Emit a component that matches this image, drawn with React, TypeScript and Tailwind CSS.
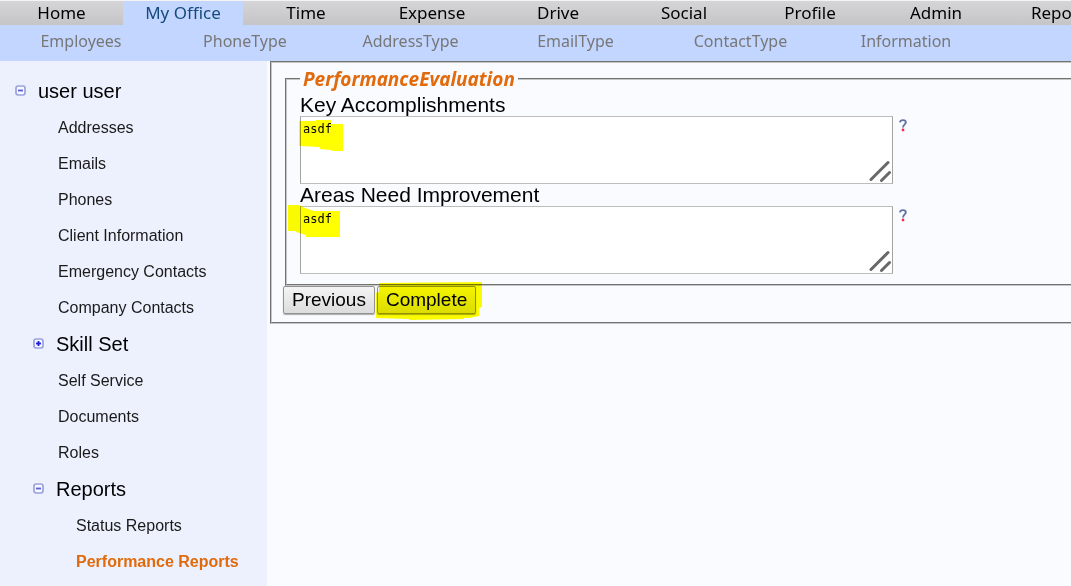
import React from "react";

const tabs = [
  { label: "Home", width: "w-[123px]" },
  { label: "My Office", width: "w-[120px]", active: true },
  { label: "Time", width: "w-[126px]" },
  { label: "Expense", width: "w-[126px]" },
  { label: "Drive", width: "w-[126px]" },
  { label: "Social", width: "w-[126px]" },
  { label: "Profile", width: "w-[126px]" },
  { label: "Admin", width: "w-[126px]" },
  { label: "Reports", width: "w-[126px]" },
];

const subTabs = [
  { label: "Employees", width: "w-[162px]" },
  { label: "PhoneType", width: "w-[166px]" },
  { label: "AddressType", width: "w-[165px]" },
  { label: "EmailType", width: "w-[165px]" },
  { label: "ContactType", width: "w-[165px]" },
  { label: "Information", width: "w-[166px]" },
];

function ToggleIcon({ open }: { open: boolean }) {
  return (
    <svg width="11" height="11" viewBox="0 0 11 11" fill="none" aria-hidden="true">
      <rect x="1" y="1" width="9" height="9" rx="2.2" fill="#f6f7ff" stroke="#9aa2dc" strokeWidth="1.7" />
      <path d="M3 5.5H8" stroke={open ? "#5a5fd8" : "#2020d0"} strokeWidth="1.8" />
      {!open && <path d="M5.5 3V8" stroke="#2020d0" strokeWidth="1.8" />}
    </svg>
  );
}

function Branch({ label, open, root = false }: { label: string; open: boolean; root?: boolean }) {
  return (
    <button
      type="button"
      aria-expanded={open}
      className={
        "flex h-[37px] items-center gap-3 pb-0.5 text-[20px] leading-6 text-black " + (root ? "pl-[15px]" : "pl-[33px]")
      }
    >
      <ToggleIcon open={open} />
      {label}
    </button>
  );
}

function Leaf({ label, deep = false, active = false }: { label: string; deep?: boolean; active?: boolean }) {
  return (
    <li className={deep ? "pl-[76px]" : "pl-[58px]"}>
      <a
        href="#"
        className={"flex h-9 items-center text-[16px] " + (active ? "font-bold text-[#e06a0c]" : "text-[#1a1a1a]")}
      >
        {label}
      </a>
    </li>
  );
}

function Mark({ className, width, height, points }: { className: string; width: number; height: number; points: string }) {
  return (
    <svg
      className={"pointer-events-none absolute mix-blend-multiply " + className}
      width={width}
      height={height}
      viewBox={`0 0 ${width} ${height}`}
      aria-hidden="true"
    >
      <polygon points={points} fill="#ffff00" />
    </svg>
  );
}

function Field({ id, label, children }: { id: string; label: string; children: React.ReactNode }) {
  return (
    <div>
      <label htmlFor={id} className="block h-[22px] text-[21px] leading-[22px]">
        {label}
      </label>
      <div className="flex h-[68px] items-start gap-1.5">
        <div className="relative">
          <textarea
            id={id}
            defaultValue="asdf"
            className="block h-[68px] w-[593px] resize-none border border-x-[#a3a3a3] border-y-[#bdbdbd] bg-white px-0.5 py-1 font-['DejaVu_Sans_Mono','Liberation_Mono',monospace] text-[12px] leading-4 text-black outline-none"
          />
          <svg className="pointer-events-none absolute right-0.5 bottom-0.5" width="22" height="22" viewBox="0 0 22 22" aria-hidden="true">
            <path d="M2 19.5L19 2.5M12.5 20.5L20.5 12.5" stroke="#686868" strokeWidth="3" strokeLinecap="round" />
          </svg>
          {children}
        </div>
        <button type="button" aria-label={"Help for " + label} className="mt-[3px]">
          <svg width="8" height="13" viewBox="0 0 8 13" fill="none" aria-hidden="true">
            <path d="M1 3.4C1.2 1.8 2.4 1.1 4 1.1C5.8 1.1 6.8 2 6.8 3.4C6.8 5.3 4 5.6 4 8.6" stroke="#6272a4" strokeWidth="1.9" />
            <rect x="2.8" y="9.6" width="2.4" height="2.6" fill="#f02850" />
          </svg>
        </button>
      </div>
    </div>
  );
}

const buttonStyle =
  "h-7 rounded-[2px] border border-[#929292] bg-linear-to-b from-[#f4f4f4] to-[#dcdcdc] px-2 text-[19px] leading-6 text-black shadow-[0_1px_1px_#aaaaaa]";

export default function App() {
  return (
    <div className="flex min-h-screen flex-col overflow-hidden bg-[#fafbff] font-['Liberation_Sans',Arial,sans-serif] text-black">
      <header className="font-['Noto_Sans',sans-serif]">
        <nav aria-label="Main" className="border-t border-[#f4f4f4] bg-linear-to-b from-[#d5d5d7] to-[#c5c5c7]">
          <ul className="flex h-6">
            {tabs.map((tab) => (
              <li key={tab.label} className={"shrink-0 " + tab.width}>
                <a
                  href="#"
                  className={
                    "flex h-full items-center justify-center text-[17px] leading-6 " +
                    (tab.active ? "bg-[#c3d6ff] text-[#174a7c]" : "text-black")
                  }
                >
                  {tab.label}
                </a>
              </li>
            ))}
          </ul>
        </nav>
        <nav aria-label="My Office" className="h-9 bg-[#c3d6ff]">
          <ul className="flex h-[31px]">
            {subTabs.map((tab) => (
              <li key={tab.label} className={"shrink-0 " + tab.width}>
                <a href="#" className="flex h-full items-center justify-center text-[16px] text-[#777777]">
                  {tab.label}
                </a>
              </li>
            ))}
          </ul>
        </nav>
      </header>

      <div className="flex grow">
        <aside className="w-[267px] shrink-0 bg-[#ecf1fd] pt-3">
          <Branch label="user user" open root />
          <ul>
            <Leaf label="Addresses" />
            <Leaf label="Emails" />
            <Leaf label="Phones" />
            <Leaf label="Client Information" />
            <Leaf label="Emergency Contacts" />
            <Leaf label="Company Contacts" />
            <li>
              <Branch label="Skill Set" open={false} />
            </li>
            <Leaf label="Self Service" />
            <Leaf label="Documents" />
            <Leaf label="Roles" />
            <li>
              <Branch label="Reports" open />
              <ul>
                <Leaf label="Status Reports" deep />
                <Leaf label="Performance Reports" deep active />
              </ul>
            </li>
          </ul>
        </aside>

        <main className="min-w-0 grow pl-[3px]">
          <form
            className="border-2 border-r-0 border-[#c6c6c6] [border-style:groove] pt-1 pb-2 pl-[11px]"
            onSubmit={(e) => e.preventDefault()}
          >
            <fieldset className="ml-0.5 border-2 border-r-0 border-[#c6c6c6] [border-style:groove] pt-[3px] pb-2.5 pl-[13px]">
              <legend className="px-[3px] font-['Noto_Sans',sans-serif] text-[19px] leading-6 font-bold text-[#e06a0c] italic">
                PerformanceEvaluation
              </legend>
              <Field id="accomplishments" label="Key Accomplishments">
                <Mark className="top-1 -left-px" width={44} height={31} points="0,1 17,1 17,0 32,0 32,4 44,4 44,31 32,31 32,30 21,29 21,27 0,26" />
              </Field>
              <Field id="improvement" label="Areas Need Improvement">
                <Mark className="-top-px -left-3" width={52} height={32} points="0,0 11,0 17,3 26,6 52,6 52,32 18,32 18,30 8,27 8,26 0,26" />
              </Field>
            </fieldset>
            <div className="flex gap-0.5">
              <button type="button" className={buttonStyle}>
                Previous
              </button>
              <div className="relative">
                <button type="submit" className={buttonStyle}>
                  Complete
                </button>
                <Mark className="-top-1 -left-px" width={106} height={38} points="3,1 106,0 106,25 103,26 103,34 98,35 94,36 88,36 88,37 33,38 33,37 0,36 0,11 3,10" />
              </div>
            </div>
          </form>
        </main>
      </div>
    </div>
  );
}
